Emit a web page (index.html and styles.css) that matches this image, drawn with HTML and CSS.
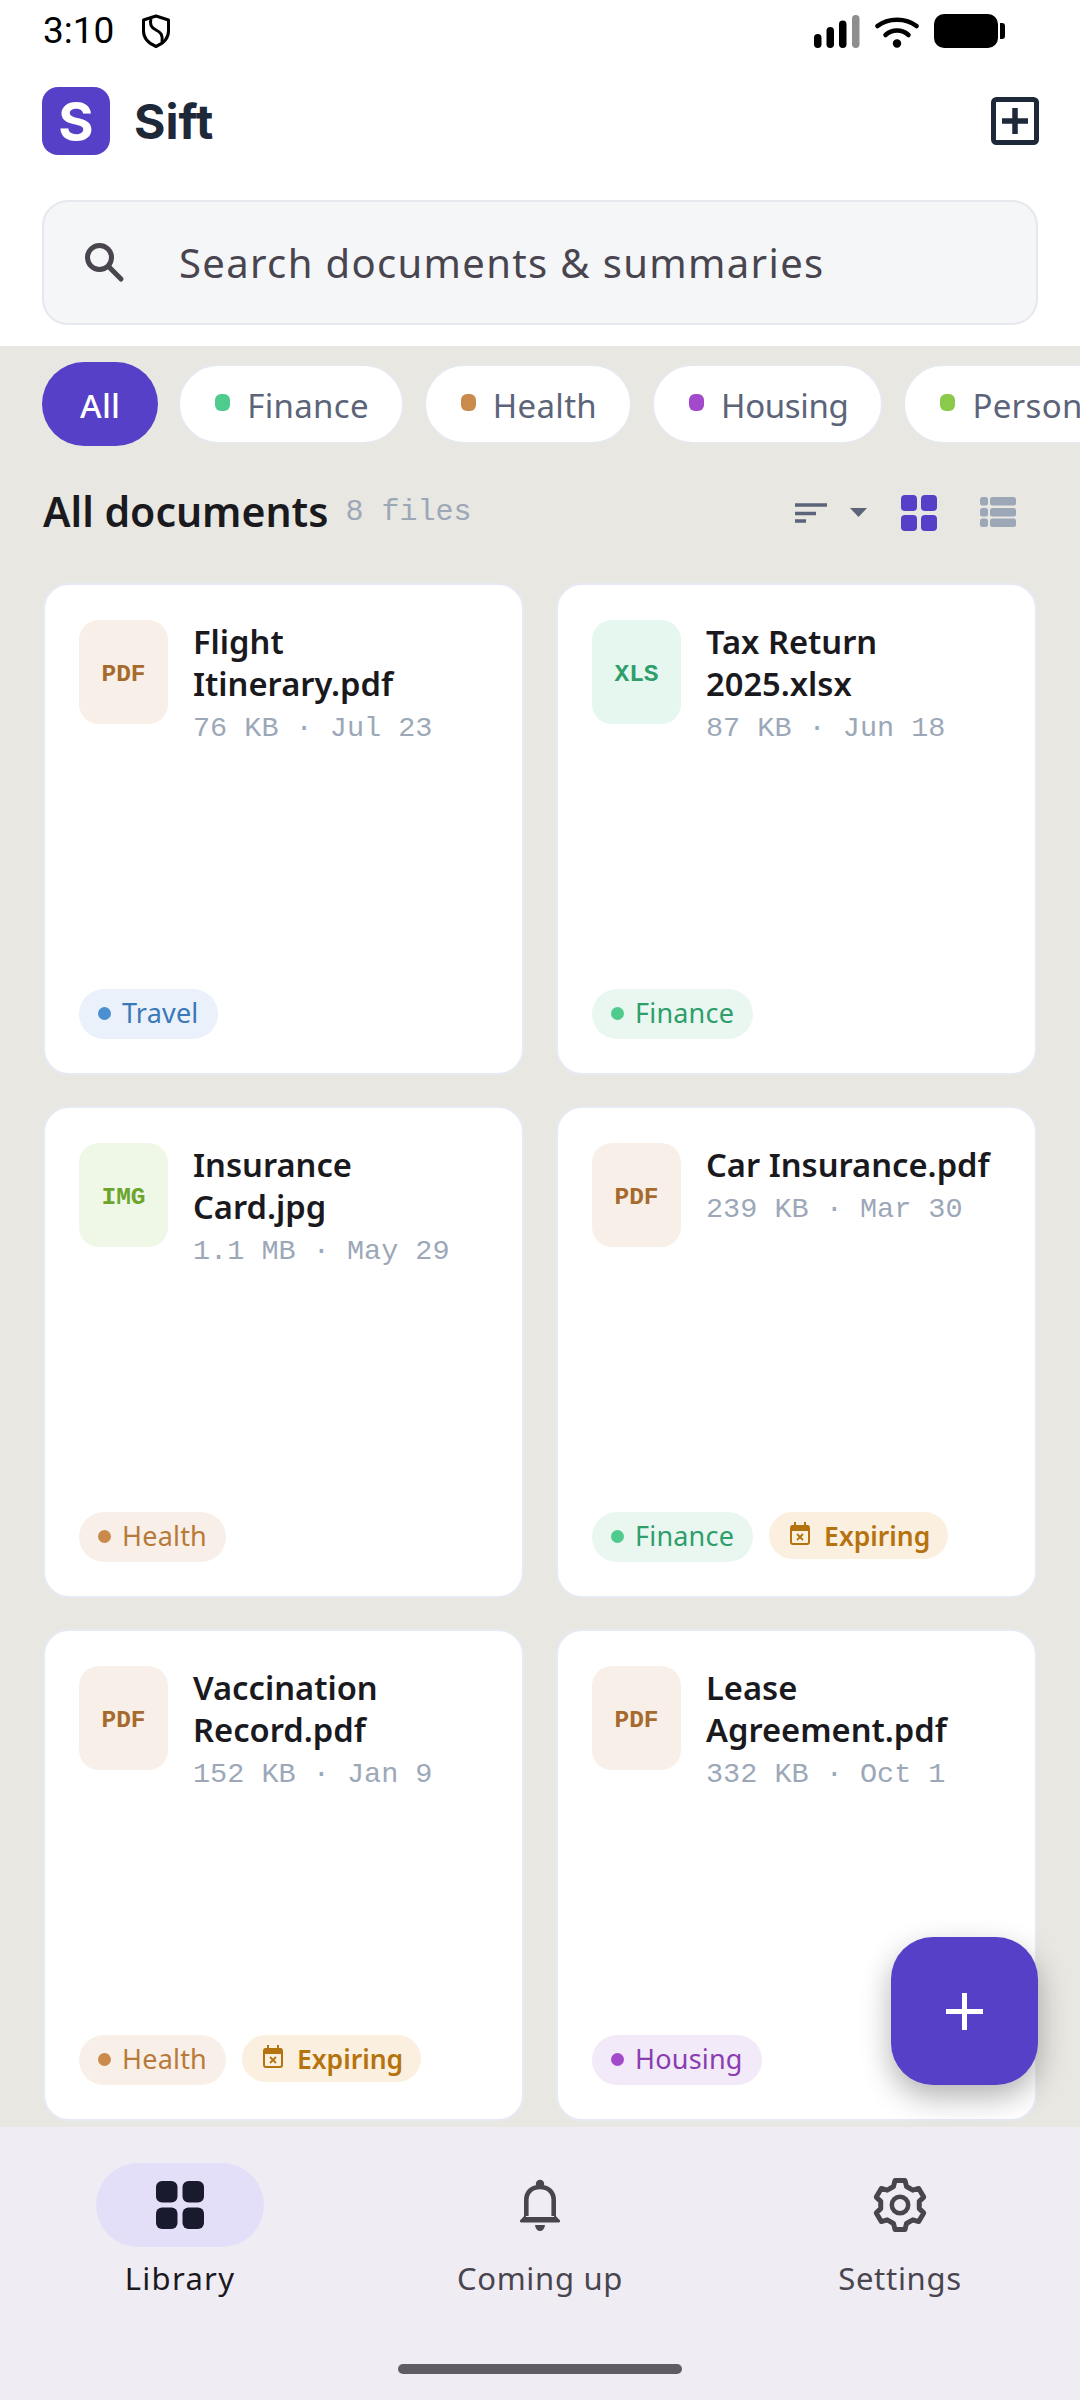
FILE: index.html
```html
<!DOCTYPE html>
<html lang="en">
<head>
<meta charset="utf-8">
<title>Sift</title>
<link rel="stylesheet" href="styles.css">
</head>
<body>
<div class="app">
  <header class="top">
    <div class="status">
      <div class="status-left">
        <span class="time">3:10</span>
        <svg class="shield" viewBox="0 0 30 34"><path d="M15 2 L27.500 6 V17 C27.500 24.500 22 29.500 15 32.500 C8 29.500 2.500 24.500 2.500 17 V6 Z" fill="none" stroke="#000" stroke-width="3" stroke-linejoin="round"/><path d="M10 5 C8 11 11 14 15 16 C20 18.500 22 21 21 28" fill="none" stroke="#000" stroke-width="3"/></svg>
      </div>
      <div class="status-right">
        <svg class="signal" viewBox="0 0 46 33"><rect x="0" y="19" width="7.500" height="14" rx="3.700"/><rect x="12.500" y="12" width="7.500" height="21" rx="3.700"/><rect x="25" y="5.500" width="7.500" height="27.500" rx="3.700"/><rect x="38" y="0" width="7.500" height="33" rx="3.700" fill="#8e8e8e"/></svg>
        <svg class="wifi" viewBox="0 0 44 33"><path d="M2.500 11 C13 2.500 31 2.500 41.500 11" fill="none" stroke="#000" stroke-width="4.500" stroke-linecap="round"/><path d="M10.500 20 C17 14 27 14 33.500 20" fill="none" stroke="#000" stroke-width="4.500" stroke-linecap="round"/><circle cx="22" cy="28.500" r="4.200"/></svg>
        <svg class="battery" viewBox="0 0 71 34"><rect x="0" y="0" width="64" height="34" rx="10"/><path d="M66 9 h2 a3 3 0 0 1 3 3 v10 a3 3 0 0 1 -3 3 h-2 z"/></svg>
      </div>
    </div>
    <div class="appbar">
      <div class="brand">
        <span class="logo">S</span>
        <span class="brand-name">Sift</span>
      </div>
      <svg class="add-doc" viewBox="0 0 48 48"><rect x="2.500" y="2.500" width="43" height="43" rx="3" fill="none" stroke="#1d2838" stroke-width="5"/><path d="M24 11 V37 M11 24 H37" stroke="#1d2838" stroke-width="5.500" fill="none"/></svg>
    </div>
    <div class="search">
      <svg class="search-icon" viewBox="0 0 40 40"><circle cx="14.500" cy="14.500" r="12" fill="none" stroke="#49454f" stroke-width="5"/><path d="M24 24 L36 36" stroke="#49454f" stroke-width="5" stroke-linecap="round" fill="none"/></svg>
      <span class="search-text">Search documents &amp; summaries</span>
    </div>
  </header>

  <main class="content">
    <div class="chips">
      <span class="chip chip-active">All</span>
      <span class="chip"><i class="chip-dot dot-finance"></i>Finance</span>
      <span class="chip"><i class="chip-dot dot-health"></i>Health</span>
      <span class="chip chip-tight"><i class="chip-dot dot-housing"></i>Housing</span>
      <span class="chip"><i class="chip-dot dot-personal"></i>Personal</span>
    </div>

    <div class="section-head">
      <div class="section-title">
        <h1>All documents</h1>
        <span class="count">8 files</span>
      </div>
      <div class="tools">
        <svg class="sort" viewBox="0 0 32 20"><path d="M0 2 H32 M0 10.500 H21 M0 18 H11" stroke="#5b6478" stroke-width="3.500" fill="none"/></svg>
        <svg class="caret" viewBox="0 0 17 9"><path d="M0 0 H17 L8.500 9 Z" fill="#5b6478"/></svg>
        <svg class="grid-icon" viewBox="0 0 36 36"><rect width="16" height="16" rx="4"/><rect x="20" width="16" height="16" rx="4"/><rect y="20" width="16" height="16" rx="4"/><rect x="20" y="20" width="16" height="16" rx="4"/></svg>
        <svg class="list-icon" viewBox="0 0 36 32"><rect y="0" width="8" height="8.500" rx="2.500"/><rect x="10" y="0" width="26" height="8.500" rx="2.500"/><rect y="11" width="8" height="8.500" rx="2.500"/><rect x="10" y="11" width="26" height="8.500" rx="2.500"/><rect y="21.500" width="8" height="8.500" rx="2.500"/><rect x="10" y="21.500" width="26" height="8.500" rx="2.500"/></svg>
      </div>
    </div>

    <div class="cards">
      <article class="card">
        <div class="card-top">
          <span class="tile tile-pdf">PDF</span>
          <div class="card-info"><h2>Flight Itinerary.pdf</h2><p>76 KB · Jul 23</p></div>
        </div>
        <div class="tags"><span class="tag tag-travel"><i></i>Travel</span></div>
      </article>
      <article class="card">
        <div class="card-top">
          <span class="tile tile-xls">XLS</span>
          <div class="card-info"><h2>Tax Return 2025.xlsx</h2><p>87 KB · Jun 18</p></div>
        </div>
        <div class="tags"><span class="tag tag-finance"><i></i>Finance</span></div>
      </article>
      <article class="card">
        <div class="card-top">
          <span class="tile tile-img">IMG</span>
          <div class="card-info"><h2>Insurance Card.jpg</h2><p>1.1 MB · May 29</p></div>
        </div>
        <div class="tags"><span class="tag tag-health"><i></i>Health</span></div>
      </article>
      <article class="card">
        <div class="card-top">
          <span class="tile tile-pdf">PDF</span>
          <div class="card-info"><h2>Car Insurance.pdf</h2><p>239 KB · Mar 30</p></div>
        </div>
        <div class="tags">
          <span class="tag tag-finance"><i></i>Finance</span>
          <span class="tag tag-expiring"><svg class="cal" viewBox="0 0 20 23"><path d="M1 5 a2 2 0 0 1 2 -2 h14 a2 2 0 0 1 2 2 v4 H1 Z" fill="currentColor"/><path d="M5 0 V4 M15 0 V4" stroke="currentColor" stroke-width="2"/><rect x="1" y="4" width="18" height="18" rx="2" fill="none" stroke="currentColor" stroke-width="2"/><path d="M7 12 L13 18 M13 12 L7 18" stroke="currentColor" stroke-width="1.800"/></svg>Expiring</span>
        </div>
      </article>
      <article class="card">
        <div class="card-top">
          <span class="tile tile-pdf">PDF</span>
          <div class="card-info"><h2>Vaccination Record.pdf</h2><p>152 KB · Jan 9</p></div>
        </div>
        <div class="tags">
          <span class="tag tag-health"><i></i>Health</span>
          <span class="tag tag-expiring"><svg class="cal" viewBox="0 0 20 23"><path d="M1 5 a2 2 0 0 1 2 -2 h14 a2 2 0 0 1 2 2 v4 H1 Z" fill="currentColor"/><path d="M5 0 V4 M15 0 V4" stroke="currentColor" stroke-width="2"/><rect x="1" y="4" width="18" height="18" rx="2" fill="none" stroke="currentColor" stroke-width="2"/><path d="M7 12 L13 18 M13 12 L7 18" stroke="currentColor" stroke-width="1.800"/></svg>Expiring</span>
        </div>
      </article>
      <article class="card">
        <div class="card-top">
          <span class="tile tile-pdf">PDF</span>
          <div class="card-info"><h2>Lease Agreement.pdf</h2><p>332 KB · Oct 1</p></div>
        </div>
        <div class="tags"><span class="tag tag-housing"><i></i>Housing</span></div>
      </article>
    </div>

    <button class="fab" aria-label="Add"><svg viewBox="0 0 37 37"><path d="M18.500 0 V37 M0 18.500 H37" stroke="#fff" stroke-width="5" fill="none"/></svg></button>
  </main>

  <nav class="nav">
    <div class="nav-items">
      <div class="nav-item nav-item-active">
        <span class="nav-pill"><svg class="nav-grid" viewBox="0 0 48 48"><rect width="21.500" height="21.500" rx="6"/><rect x="26.500" width="21.500" height="21.500" rx="6"/><rect y="26.500" width="21.500" height="21.500" rx="6"/><rect x="26.500" y="26.500" width="21.500" height="21.500" rx="6"/></svg></span>
        <span class="nav-label">Library</span>
      </div>
      <div class="nav-item">
        <span class="nav-pill"><svg class="nav-bell" viewBox="0 0 40 52"><circle cx="20" cy="5" r="4.200" fill="#49454f"/><path d="M6.300 37 V21 C6.300 13 12 8 20 8 C28 8 33.700 13 33.700 21 V37" fill="none" stroke="#49454f" stroke-width="4.600"/><path d="M6 35 L.7 40.700 a1.500 1.500 0 0 0 1 2.800 H38.300 a1.500 1.500 0 0 0 1 -2.800 L34 35 V38 H6 Z" fill="#49454f"/><path d="M15 46 H25 C24.500 50 22.500 52 20 52 C17.500 52 15.500 50 15 46 Z" fill="#49454f"/></svg></span>
        <span class="nav-label">Coming up</span>
      </div>
      <div class="nav-item">
        <span class="nav-pill"><svg class="nav-gear" viewBox="0 0 60 60"><path d="M23.500 11.500 25 5.500 35 5.500 36.500 11.500 42.770 15.120 48.720 13.420 53.720 22.080 49.270 26.380 49.270 33.620 53.720 37.920 48.720 46.580 42.770 44.880 36.500 48.500 35 54.500 25 54.500 23.500 48.500 17.230 44.880 11.280 46.580 6.280 37.920 10.730 33.620 10.730 26.380 6.280 22.080 11.280 13.420 17.230 15.120 Z" fill="none" stroke="#49454f" stroke-width="5" stroke-linejoin="round"/><circle cx="30" cy="30" r="8.200" fill="none" stroke="#49454f" stroke-width="4.500"/></svg></span>
        <span class="nav-label">Settings</span>
      </div>
    </div>
    <div class="handle"></div>
  </nav>
</div>
</body>
</html>
```

FILE: styles.css
```css
* { box-sizing: border-box; }
html, body { margin: 0; padding: 0; }
body { width: 1080px; height: 2400px; overflow: hidden; background: #e8e7e2; font-family: "Noto Sans", "Open Sans", sans-serif; }
h1, h2, p { margin: 0; }
i { font-style: normal; }
svg { display: block; flex: none; }

.app { display: flex; flex-direction: column; height: 2400px; }

.top { height: 346px; background: #fff; padding: 0 42px; flex: none; }
.status { height: 62px; display: flex; justify-content: space-between; align-items: center; margin: 0 -42px; padding: 0 75px 0 43px; }
.status-left { display: flex; align-items: center; gap: 27px; }
.time { font-family: Roboto, sans-serif; font-size: 37px; color: #000; line-height: 62px; }
.shield { width: 30px; height: 34px; }
.status-right { display: flex; align-items: center; gap: 15px; }
.signal { width: 46px; height: 33px; }
.wifi { width: 44px; height: 33px; }
.battery { width: 71px; height: 34px; }

.appbar { display: flex; justify-content: space-between; align-items: center; margin-top: 25px; height: 68px; }
.brand { display: flex; align-items: center; gap: 24px; }
.logo { width: 68px; height: 68px; border-radius: 16px; background: #5640c8; color: #fff; font-family: Inter, sans-serif; font-weight: 700; font-size: 54px; display: flex; align-items: center; justify-content: center; }
.brand-name { font-family: Inter, sans-serif; font-size: 48px; font-weight: 700; color: #1d2838; }
.add-doc { width: 48px; height: 48px; margin-right: -1px; }

.search { margin-top: 45px; height: 125px; border: 2px solid #e6e8ee; border-radius: 26px; background: #f5f6f8; display: flex; align-items: center; padding-left: 41px; }
.search-icon { width: 40px; height: 40px; }
.search-text { margin-left: 54px; font-size: 40px; letter-spacing: 1.350px; color: #49454f; }

.content { flex: 1; min-height: 0; position: relative; overflow: hidden; }

.chips { display: flex; align-items: center; gap: 20px; padding: 16px 0 0 42px; height: 100px; overflow: hidden; }
.chip { flex: none; height: 80px; border-radius: 40px; background: #fff; border: 2px solid #e6e8ee; display: flex; align-items: center; gap: 17px; padding: 3px 33px 0 35px; font-size: 33px; letter-spacing: .3px; color: #5b6478; }
.chip-tight { letter-spacing: -.35px; }
.chip-active { height: 84px; border: 0; border-radius: 42px; background: #5640c8; color: #fff; font-weight: 500; padding: 3px 38px 0; }
.chip-dot { width: 15px; height: 17px; border-radius: 6px; margin-bottom: 6px; }
.dot-finance { background: #4ecb8d; }
.dot-health { background: #c98a4b; }
.dot-housing { background: #a349cc; }
.dot-personal { background: #8bc94b; }

.section-head { display: flex; justify-content: space-between; align-items: center; padding: 1px 64px 0 43px; height: 130px; margin-bottom: 7px; }
.section-title { display: flex; align-items: center; gap: 17px; }
.section-title h1 { font-size: 41px; font-weight: 600; color: #1a1a1e; margin-top: -2px; }
.count { font-family: "Liberation Mono", monospace; font-size: 30px; color: #9ca8b8; }
.tools { display: flex; align-items: center; margin-top: 2px; }
.sort { width: 32px; height: 20px; }
.caret { width: 17px; height: 9px; margin-left: 23px; }
.grid-icon { width: 36px; height: 36px; fill: #5640c8; margin-left: 34px; }
.list-icon { width: 36px; height: 32px; fill: #9ca8b8; margin-left: 43px; }

.cards { display: grid; grid-template-columns: 481px 481px; grid-auto-rows: 492px; gap: 31px 32px; padding-left: 43px; }
.card { background: #fff; border: 2px solid #e6eaf2; border-radius: 26px; padding: 35px 34px 34px; display: flex; flex-direction: column; justify-content: space-between; min-width: 0; }
.card-top { display: flex; gap: 25px; align-items: flex-start; }
.tile { flex: none; width: 89px; height: 104px; border-radius: 20px; display: flex; align-items: center; justify-content: center; font-family: "Liberation Mono", monospace; font-weight: 700; font-size: 24.500px; padding-top: 4px; }
.tile-pdf { background: #f8f0e8; color: #a66a2e; }
.tile-xls { background: #e6f7ef; color: #2e9e6b; }
.tile-img { background: #eff7e6; color: #6ba52e; }
.card-info { min-width: 0; padding-top: 1px; }
.card-info h2 { max-width: 291px; font-size: 32.700px; line-height: 42px; font-weight: 600; color: #1a1a1e; }
.card-info p { font-family: "Liberation Mono", monospace; font-size: 28.500px; line-height: 36px; color: #9ca8b8; margin-top: 6px; }

.tags { display: flex; gap: 16px; align-items: flex-start; }
.tag { height: 50px; border-radius: 25px; display: flex; align-items: center; gap: 11px; padding: 0 19px 4px; font-size: 27px; letter-spacing: .2px; }
.tag i { width: 13px; height: 13px; border-radius: 50%; margin-top: 3px; }
.tag-finance { background: #eaf7f1; color: #2e9e6b; }
.tag-finance i { background: #4ecb8d; }
.tag-health { background: #f8f0e8; color: #b87a3a; }
.tag-health i { background: #c98a4b; }
.tag-housing { background: #f2eaf8; color: #8a3db0; }
.tag-housing i { background: #a349cc; }
.tag-travel { background: #eaf1fa; color: #3a78b8; }
.tag-travel i { background: #4a8fd0; }
.tag-expiring { height: 47px; background: #fbf0df; color: #b5730f; font-weight: 600; font-size: 26.500px; letter-spacing: 0; padding: 0 18px 0 21px; gap: 14px; }
.cal { width: 20px; height: 23px; margin-bottom: 4px; }

.fab { position: absolute; left: 891px; top: 1591px; width: 147px; height: 148px; border: 0; border-radius: 42px; background: #5640c8; display: flex; align-items: center; justify-content: center; box-shadow: 0 12px 30px rgba(0, 0, 0, .3); padding: 0; }
.fab svg { width: 37px; height: 37px; }

.nav { flex: none; height: 273px; background: #f0ecf3; display: flex; flex-direction: column; align-items: center; padding-top: 36px; }
.nav-items { display: flex; width: 100%; height: 201px; justify-content: space-around; }
.nav-item { width: 360px; display: flex; flex-direction: column; align-items: center; gap: 11px; }
.nav-pill { width: 168px; height: 84px; border-radius: 42px; display: flex; align-items: center; justify-content: center; }
.nav-item-active .nav-pill { background: #e4dff8; }
.nav-grid { width: 48px; height: 48px; fill: #1a1a2e; }
.nav-bell { width: 40px; height: 52px; }
.nav-gear { width: 60px; height: 60px; }
.nav-label { font-size: 31px; letter-spacing: .7px; color: #49454f; line-height: 40px; }
.nav-item-active .nav-label { color: #1a1a1e; letter-spacing: 1.300px; }
.handle { width: 284px; height: 10px; border-radius: 5px; background: #5f5d63; }
```
